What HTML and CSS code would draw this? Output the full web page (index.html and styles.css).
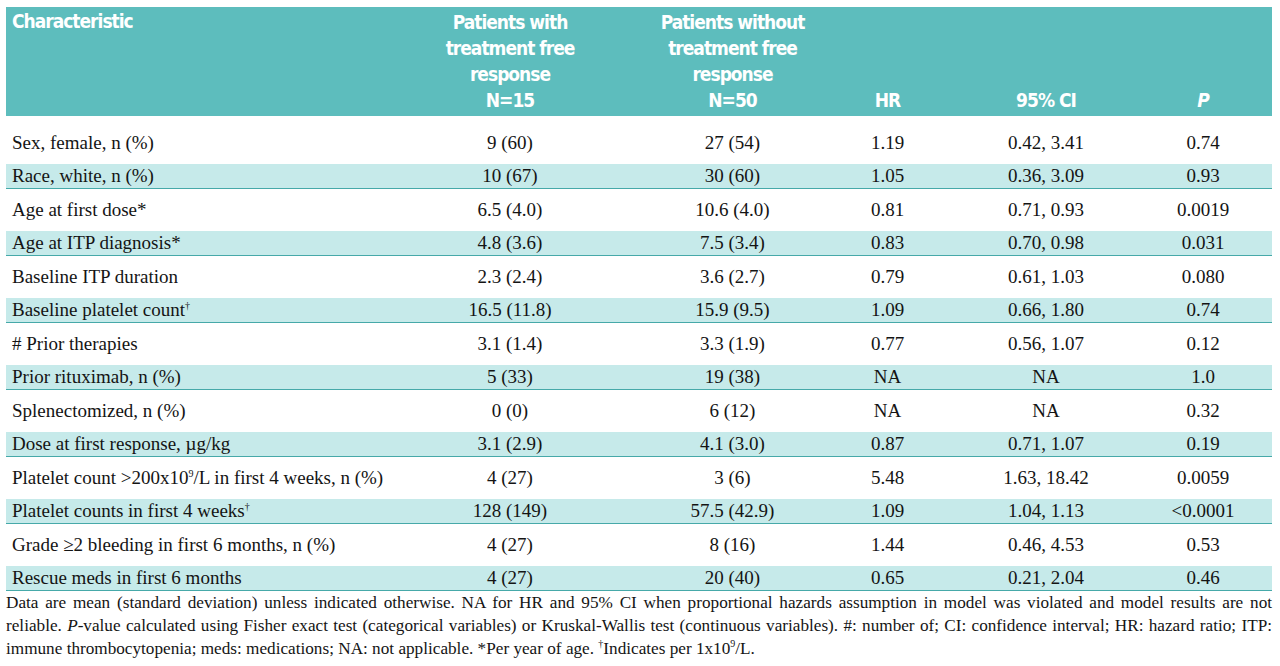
FILE: index.html
```html
<!DOCTYPE html>
<html lang="en">
<head>
<meta charset="utf-8">
<title>Treatment free response table</title>
<link rel="stylesheet" href="styles.css">
</head>
<body>
<div class="page">
  <div class="table">
    <div class="row head">
      <div class="cell first top">Characteristic</div>
      <div class="cell">Patients with<br>treatment free<br>response<br>N=15</div>
      <div class="cell">Patients without<br>treatment free<br>response<br>N=50</div>
      <div class="cell">HR</div>
      <div class="cell">95% CI</div>
      <div class="cell"><i>P</i></div>
    </div>
    <div class="body">
      <div class="row w first-row"><div class="cell first">Sex, female, n (%)</div><div class="cell">9 (60)</div><div class="cell">27 (54)</div><div class="cell">1.19</div><div class="cell">0.42, 3.41</div><div class="cell">0.74</div></div>
      <div class="row t"><div class="cell first">Race, white, n (%)</div><div class="cell">10 (67)</div><div class="cell">30 (60)</div><div class="cell">1.05</div><div class="cell">0.36, 3.09</div><div class="cell">0.93</div></div>
      <div class="row w"><div class="cell first">Age at first dose*</div><div class="cell">6.5 (4.0)</div><div class="cell">10.6 (4.0)</div><div class="cell">0.81</div><div class="cell">0.71, 0.93</div><div class="cell">0.0019</div></div>
      <div class="row t"><div class="cell first">Age at ITP diagnosis*</div><div class="cell">4.8 (3.6)</div><div class="cell">7.5 (3.4)</div><div class="cell">0.83</div><div class="cell">0.70, 0.98</div><div class="cell">0.031</div></div>
      <div class="row w"><div class="cell first">Baseline ITP duration</div><div class="cell">2.3 (2.4)</div><div class="cell">3.6 (2.7)</div><div class="cell">0.79</div><div class="cell">0.61, 1.03</div><div class="cell">0.080</div></div>
      <div class="row t"><div class="cell first">Baseline platelet count<sup class="mark">†</sup></div><div class="cell">16.5 (11.8)</div><div class="cell">15.9 (9.5)</div><div class="cell">1.09</div><div class="cell">0.66, 1.80</div><div class="cell">0.74</div></div>
      <div class="row w"><div class="cell first"># Prior therapies</div><div class="cell">3.1 (1.4)</div><div class="cell">3.3 (1.9)</div><div class="cell">0.77</div><div class="cell">0.56, 1.07</div><div class="cell">0.12</div></div>
      <div class="row t"><div class="cell first">Prior rituximab, n (%)</div><div class="cell">5 (33)</div><div class="cell">19 (38)</div><div class="cell">NA</div><div class="cell">NA</div><div class="cell">1.0</div></div>
      <div class="row w"><div class="cell first">Splenectomized, n (%)</div><div class="cell">0 (0)</div><div class="cell">6 (12)</div><div class="cell">NA</div><div class="cell">NA</div><div class="cell">0.32</div></div>
      <div class="row t"><div class="cell first">Dose at first response, µg/kg</div><div class="cell">3.1 (2.9)</div><div class="cell">4.1 (3.0)</div><div class="cell">0.87</div><div class="cell">0.71, 1.07</div><div class="cell">0.19</div></div>
      <div class="row w"><div class="cell first">Platelet count &gt;200x10<sup class="mark">9</sup>/L in first 4 weeks, n (%)</div><div class="cell">4 (27)</div><div class="cell">3 (6)</div><div class="cell">5.48</div><div class="cell">1.63, 18.42</div><div class="cell">0.0059</div></div>
      <div class="row t"><div class="cell first">Platelet counts in first 4 weeks<sup class="mark">†</sup></div><div class="cell">128 (149)</div><div class="cell">57.5 (42.9)</div><div class="cell">1.09</div><div class="cell">1.04, 1.13</div><div class="cell">&lt;0.0001</div></div>
      <div class="row w"><div class="cell first">Grade ≥2 bleeding in first 6 months, n (%)</div><div class="cell">4 (27)</div><div class="cell">8 (16)</div><div class="cell">1.44</div><div class="cell">0.46, 4.53</div><div class="cell">0.53</div></div>
      <div class="row t"><div class="cell first">Rescue meds in first 6 months</div><div class="cell">4 (27)</div><div class="cell">20 (40)</div><div class="cell">0.65</div><div class="cell">0.21, 2.04</div><div class="cell">0.46</div></div>
    </div>
  </div>
  <div class="notes">
    <span class="line just">Data are mean (standard deviation) unless indicated otherwise. NA for HR and 95% CI when proportional hazards assumption in model was violated and model results are not</span>
    <span class="line just">reliable. <i>P</i>-value calculated using Fisher exact test (categorical variables) or Kruskal-Wallis test (continuous variables). #: number of; CI: confidence interval; HR: hazard ratio; ITP:</span>
    <span class="line">immune thrombocytopenia; meds: medications; NA: not applicable. *Per year of age. <sup class="mark">†</sup>Indicates per 1x10<sup class="mark">9</sup>/L.</span>
  </div>
</div>
</body>
</html>
```

FILE: styles.css
```css
html, body {
  margin: 0;
  padding: 0;
  background: #ffffff;
}

.page {
  width: 1266px;
  padding: 7px 8px 0 6px;
  font-family: "Liberation Serif", "Times New Roman", serif;
  color: #141414;
}

.row {
  display: grid;
  grid-template-columns: 394px 220px 225px 85px 232px 82px 28px;
}

.cell {
  text-align: center;
  white-space: nowrap;
}

.cell.first {
  text-align: left;
  padding-left: 6px;
}

.head {
  height: 109px;
  background: #5dbdbd;
  color: #ffffff;
  font-family: "DejaVu Sans Condensed", "Liberation Sans", sans-serif;
  font-weight: bold;
  font-size: 19px;
  letter-spacing: -1px;
  line-height: 26px;
  align-items: end;
  padding-bottom: 3px;
  box-sizing: border-box;
}

.head .cell.top {
  align-self: start;
  padding-top: 1px;
}

.body {
  display: flex;
  flex-direction: column;
  font-size: 19px;
  line-height: 22px;
}

.body .row {
  align-items: center;
}

.row.w {
  height: 42px;
}

.row.first-row {
  margin-top: 6px;
}

.row.t {
  height: 24px;
  background: #c6eaea;
  border-bottom: 1px solid #46a9a9;
}

.mark {
  font-size: 10px;
  line-height: 0;
  vertical-align: 7px;
}

.notes {
  font-size: 17.2px;
  line-height: 23px;
}

.line {
  display: block;
  white-space: nowrap;
}

.line.just {
  text-align: justify;
  text-align-last: justify;
}
```
